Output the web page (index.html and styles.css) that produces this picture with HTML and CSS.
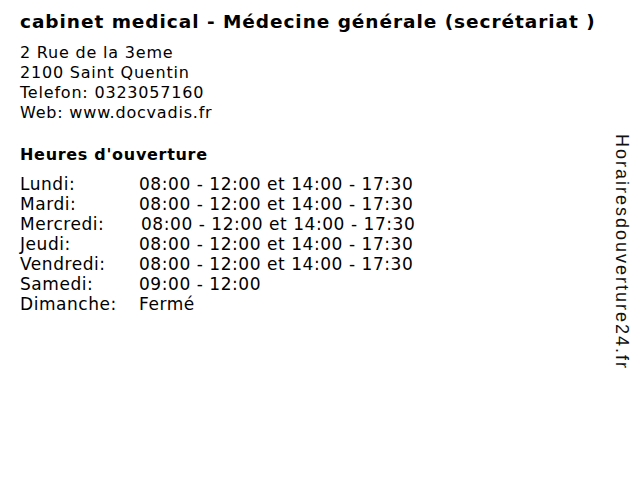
FILE: index.html
```html
<!DOCTYPE html>
<html>
<head>
<meta charset="utf-8">
<link rel="stylesheet" href="styles.css">
</head>
<body>
<div class="page">
  <main class="content">
    <h1 class="title">cabinet medical - Médecine générale (secrétariat )</h1>
    <div class="address">
      <div>2 Rue de la 3eme</div>
      <div>2100 Saint Quentin</div>
      <div>Telefon: 0323057160</div>
      <div>Web: www.docvadis.fr</div>
    </div>
    <h2 class="heading">Heures d'ouverture</h2>
    <div class="hours">
      <div class="day">Lundi:</div><div class="time">08:00 - 12:00 et 14:00 - 17:30</div>
      <div class="day">Mardi:</div><div class="time">08:00 - 12:00 et 14:00 - 17:30</div>
      <div class="day">Mercredi:</div><div class="time shift">08:00 - 12:00 et 14:00 - 17:30</div>
      <div class="day">Jeudi:</div><div class="time">08:00 - 12:00 et 14:00 - 17:30</div>
      <div class="day">Vendredi:</div><div class="time">08:00 - 12:00 et 14:00 - 17:30</div>
      <div class="day">Samedi:</div><div class="time">09:00 - 12:00</div>
      <div class="day">Dimanche:</div><div class="time">Fermé</div>
    </div>
  </main>
  <aside class="side">Horairesdouverture24.fr</aside>
</div>
</body>
</html>
```
FILE: styles.css
```css
html, body {
  margin: 0;
  padding: 0;
  background: #fff;
}
body {
  font-family: "DejaVu Sans", Verdana, sans-serif;
  color: #000;
  width: 640px;
  height: 480px;
  overflow: hidden;
}
.page {
  display: flex;
  justify-content: space-between;
}
.content {
  padding: 11px 0 0 20px;
}
.title {
  margin: 0;
  font-size: 18.5px;
  letter-spacing: 0.95px;
  font-weight: bold;
  line-height: 22px;
}
.address {
  margin-top: 10px;
  font-size: 16px;
  letter-spacing: 0.8px;
  line-height: 20px;
}
.heading {
  margin: 22px 0 0 0;
  font-size: 16px;
  letter-spacing: 0.7px;
  font-weight: bold;
  line-height: 20px;
}
.hours {
  margin-top: 9px;
  display: grid;
  grid-template-columns: 119px auto;
  font-size: 17px;
  letter-spacing: 0.55px;
  line-height: 20px;
}
.shift {
  padding-left: 2px;
}
.side {
  margin: 134px 8px 0 0;
  writing-mode: vertical-rl;
  font-family: "Liberation Sans", Arial, sans-serif;
  font-size: 18px;
  letter-spacing: 2px;
  line-height: 20px;
  color: #111;
}
```
